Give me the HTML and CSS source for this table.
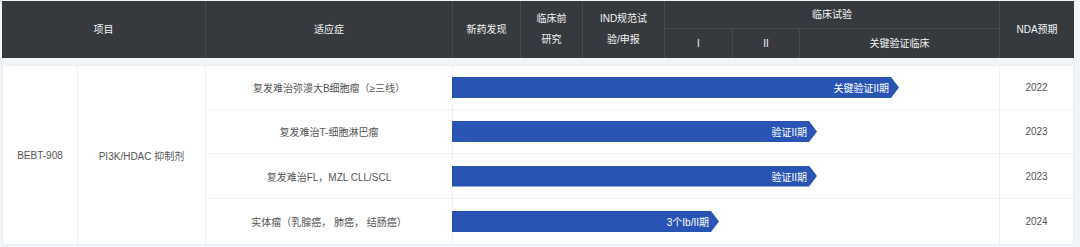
FILE: index.html
```html
<!DOCTYPE html>
<html lang="zh">
<head>
<meta charset="utf-8">
<link rel="stylesheet" href="styles.css">
</head>
<body>
<div class="page">
  <div class="head">
    <div class="hc span2 c1">项目</div>
    <div class="hc span2 c2">适应症</div>
    <div class="hc span2 c3">新药发现</div>
    <div class="hc span2 c4 two">临床前<br>研究</div>
    <div class="hc span2 c5 two">IND规范试<br>验/申报</div>
    <div class="hc group">临床试验</div>
    <div class="hc span2 c9 last">NDA预期</div>
    <div class="hc sub c6">I</div>
    <div class="hc sub c7">II</div>
    <div class="hc sub c8">关键验证临床</div>
  </div>
  <div class="body">
    <div class="bc proj">BEBT-908</div>
    <div class="bc mech">PI3K/HDAC 抑制剂</div>

    <div class="bc ind">复发难治弥漫大B细胞瘤（≥三线）</div>
    <div class="bc track"><div class="bar" style="width:447px">关键验证II期</div></div>
    <div class="bc year">2022</div>

    <div class="bc ind">复发难治T-细胞淋巴瘤</div>
    <div class="bc track"><div class="bar" style="width:365px">验证II期</div></div>
    <div class="bc year">2023</div>

    <div class="bc ind">复发难治FL，MZL CLL/SCL</div>
    <div class="bc track"><div class="bar" style="width:365px">验证II期</div></div>
    <div class="bc year">2023</div>

    <div class="bc ind last">实体瘤（乳腺癌， 肺癌， 结肠癌）</div>
    <div class="bc track last"><div class="bar" style="width:267px">3个Ib/II期</div></div>
    <div class="bc year last">2024</div>
  </div>
</div>
</body>
</html>
```

FILE: styles.css
```css
* { box-sizing: border-box; }
html, body { margin: 0; padding: 0; }
body {
  background: #f1f4f8;
  font-family: "Liberation Sans", "Noto Sans CJK SC", sans-serif;
  font-size: 10px;
  width: 1080px;
  height: 247px;
  overflow: hidden;
}
.page {
  padding: 1px 6px 0 2px;
}
.head {
  display: grid;
  grid-template-columns: 204px 247px 68px 62px 82px 68px 67px 200px 74px;
  grid-template-rows: 28px 29px;
  background: #363a3f;
  color: #f4f4f4;
  width: 1072px;
}
.hc {
  display: flex;
  align-items: center;
  justify-content: center;
  text-align: center;
  border-right: 1px solid #464a50;
  line-height: 21px;
}
.hc.last { border-right: none; }
.span2 { grid-row: 1 / span 2; }
.c1 { grid-column: 1; }
.c2 { grid-column: 2; }
.c3 { grid-column: 3; }
.c4 { grid-column: 4; }
.c5 { grid-column: 5; }
.c6 { grid-column: 6; }
.c7 { grid-column: 7; }
.c8 { grid-column: 8; }
.c9 { grid-column: 9; }
.group {
  grid-row: 1;
  grid-column: 6 / span 3;
  border-bottom: 1px solid #464a50;
}
.sub { grid-row: 2; }
.hc.two { padding-bottom: 1px; }

.body {
  margin-top: 7px;
  width: 1072px;
  background: #fff;
  border: 1px solid #e9eef3;
  display: grid;
  grid-template-columns: 75px 128px 247px 547px 73px;
  grid-template-rows: 44px 44px 45px 45px;
  color: #555;
}
.bc {
  display: flex;
  align-items: center;
  justify-content: center;
  text-align: center;
  border-right: 1px solid #eff2f5;
  border-bottom: 1px solid #f2f4f7;
}
.bc.last { border-bottom: none; }
.bc.year { border-right: none; }
.proj, .mech {
  grid-row: 1 / span 4;
  border-bottom: none;
}
.track {
  justify-content: flex-start;
}
.bar {
  height: 21px;
  margin-left: -1px;
  background: #2a54b4;
  color: #fff;
  display: flex;
  align-items: center;
  justify-content: flex-end;
  padding-right: 10px;
  clip-path: polygon(0 0, calc(100% - 8px) 0, 100% 50%, calc(100% - 8px) 100%, 0 100%);
  white-space: nowrap;
}
```
